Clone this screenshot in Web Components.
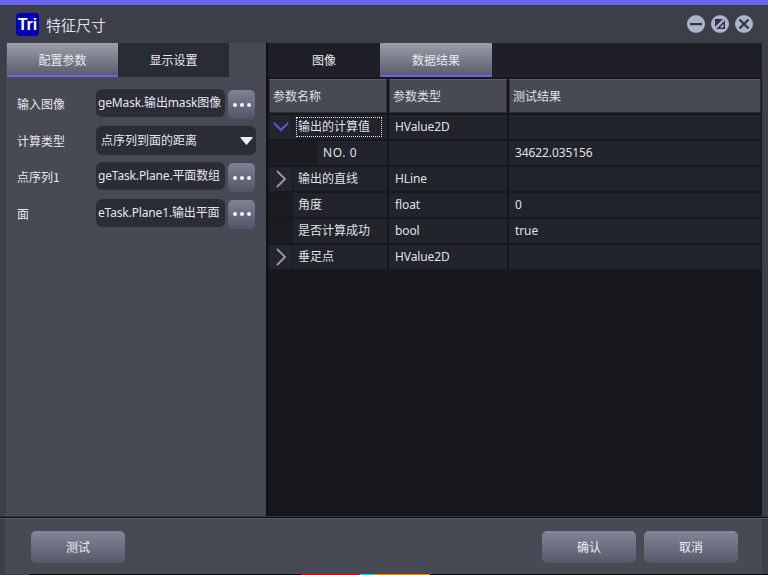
<!DOCTYPE html>
<html lang="zh"><head><meta charset="utf-8"><title>特征尺寸</title>
<style>
html,body{margin:0;height:100%;background:#000;overflow:hidden}
body{font:12px/1.2 "Noto Sans","Noto Sans CJK SC",sans-serif;color:#e4e6ec}
</style></head><body>
<feature-dialog>
  <title-bar slot="title" text="特征尺寸"></title-bar>
  <side-pane slot="left">
    <tab-strip slot="tabs" items="配置参数|显示设置" active="0"></tab-strip>
    <param-row label="输入图像" value="geMask.输出mask图像"></param-row>
    <param-row label="计算类型" value="点序列到面的距离" select></param-row>
    <param-row label="点序列1" value="geTask.Plane.平面数组"></param-row>
    <param-row label="面" value="eTask.Plane1.输出平面"></param-row>
  </side-pane>
  <result-pane slot="right">
    <tab-strip slot="tabs" items="图像|数据结果" active="1"></tab-strip>
    <result-row header a="参数名称" b="参数类型" c="测试结果"></result-row>
    <result-row open a="输出的计算值" b="HValue2D" focus></result-row>
    <result-row child a="NO. 0" c="34622.035156"></result-row>
    <result-row closed a="输出的直线" b="HLine"></result-row>
    <result-row a="角度" b="float" c="0"></result-row>
    <result-row a="是否计算成功" b="bool" c="true"></result-row>
    <result-row closed a="垂足点" b="HValue2D"></result-row>
  </result-pane>
  <dlg-button slot="foot">测试</dlg-button>
  <dlg-button slot="foot-right">确认</dlg-button>
  <dlg-button slot="foot-right">取消</dlg-button>
</feature-dialog>
<script>
const def=(n,html)=>customElements.define(n,class extends HTMLElement{
  connectedCallback(){ if(this.shadowRoot)return; const s=this.attachShadow({mode:'open'}); s.innerHTML=typeof html==='function'?html(this):html;} });
const attr=(e,n)=>{const v=e.getAttribute(n);return v==null?'':v};

def('feature-dialog',`<style>
:host{display:grid;grid-template-rows:5px 38px 473px 3px 55px 1px;height:575px;width:768px;background:#474954}
.accent{background:#6a63f0}
.title{background:#3c3e49;display:flex}
.body{display:grid;grid-template-columns:6px 260px 2px 494px 6px;background:#3c3e49;min-height:0}
.sep{background:#101116;border-top:1px solid #33343c;border-bottom:1px solid #565863;box-sizing:border-box}
.foot{display:flex;background:#474954;padding:12px 24px 11px 26px;border-left:5px solid #3c3e49;border-right:6px solid #3c3e49;justify-content:space-between;box-sizing:border-box}
.foot>div{display:flex;gap:8px}
.edge{background:linear-gradient(90deg,#3c3e49 0 30px,#0b0b0e 30px 301px,#e00000 301px 360px,#20d8d0 360px 375px,#f08000 375px 430px,#0b0b0e 430px)}
.splitter{background:#0f1014}
</style>
<div class="accent"></div>
<div class="title"><slot name="title"></slot></div>
<div class="body"><div></div><slot name="left"></slot><div class="splitter"></div><slot name="right"></slot><div></div></div>
<div class="sep"></div>
<div class="foot"><div><slot name="foot"></slot></div><div><slot name="foot-right"></slot></div></div>
<div class="edge"></div>`);

def('title-bar',e=>`<style>
:host{display:flex;align-items:center;flex:1;padding:0 15px 0 16px;height:38px;box-sizing:border-box}
.logo{width:23px;height:23px;border-radius:4px;background:#0000b4;color:#fff;font:700 16px/23px "Liberation Sans",sans-serif;text-align:center;margin-top:1px}
h1{margin:0 0 0 7px;font:400 15px/1 "Noto Sans CJK SC",sans-serif;color:#dcdee6;flex:1}
.btns{display:flex;gap:6px}
svg{width:18px;height:18px;display:block}
</style>
<div class="logo">Tri</div><h1>${attr(e,'text')}</h1>
<div class="btns">
<svg viewBox="0 0 18 18"><circle cx="9" cy="9" r="9" fill="#aeb3cc"/><rect x="3" y="8" width="12" height="2.2" fill="#33343e"/></svg>
<svg viewBox="0 0 18 18"><circle cx="9" cy="9" r="9" fill="#aeb3cc"/><path d="M4 4h8L4 12z" fill="#33343e"/><path d="M13.2 7v6.2H7z" fill="none" stroke="#33343e" stroke-width="1.5"/></svg>
<svg viewBox="0 0 18 18"><circle cx="9" cy="9" r="9" fill="#aeb3cc"/><path d="M4.5 4.5l9 9M13.5 4.5l-9 9" stroke="#33343e" stroke-width="2.2"/></svg>
</div>`);

def('tab-strip',e=>{
 const items=attr(e,'items').split('|'),a=+attr(e,'active');
 return `<style>
:host{display:flex;height:34px;background:var(--strip,#2a2c35);width:var(--w,auto);box-sizing:border-box}
.t{width:var(--tw,111px);box-sizing:border-box;text-align:center;font:12px/34px "Noto Sans CJK SC",sans-serif;color:#e8e9ee}
.on{background:linear-gradient(#9c9eac,#5a5d6b);border-bottom:2px solid #6a63f0;line-height:33px}
</style>${items.map((t,i)=>`<div class="t ${i==a?'on':''}">${t}</div>`).join('')}`});

def('side-pane',`<style>
:host{display:flex;flex-direction:column;background:#474954;min-width:0;--w:222px;--strip:#2a2c35}
.tabs{padding-left:1px}
.form{display:grid;grid-auto-rows:36.67px;padding:12px 10px 0 11px}
</style><div class="tabs"><slot name="tabs"></slot></div><div class="form"><slot></slot></div>`);

def('param-row',e=>{
 const sel=e.hasAttribute('select');
 return `<style>
:host{display:grid;grid-template-columns:79px 129px 3px 27px;align-items:start;color:#e4e6ec;font:12px/28px "Noto Sans","Noto Sans CJK SC",sans-serif}
.l{font-family:"Noto Sans CJK SC","Noto Sans",sans-serif;line-height:29px;white-space:nowrap}
.f{background:#2a2c38;border-radius:6px;height:28px;overflow:hidden;white-space:nowrap;padding:0 5px 0 2px;box-sizing:border-box;letter-spacing:-.15px}
.s{grid-column:2 / 5;display:flex;justify-content:space-between;align-items:center;padding:1px 3px 0 5px;width:160px;height:29px;letter-spacing:0}
.b{grid-column:4;background:linear-gradient(#7f8294,#525566);border-radius:5px;height:29px;margin-top:1px;display:flex;align-items:center;justify-content:center;gap:3px}
.b i{width:4px;height:4px;border-radius:50%;background:#f2f3f6}
svg{width:13px;height:8px}
</style><div class="l">${attr(e,'label')}</div>${sel?
`<div class="f s"><span>${attr(e,'value')}</span><svg viewBox="0 0 13 8"><path d="M1 0h11q1 0 .5 1L7 7.5q-.5.5-1 0L.5 1Q0 0 1 0z" fill="#eceef2"/></svg></div>`:
`<div class="f">${attr(e,'value')}</div><div></div><div class="b"><i></i><i></i><i></i></div>`}`});

def('result-pane',`<style>
:host{display:flex;flex-direction:column;background:#17181e;min-width:0;--w:auto;--tw:112px;--strip:#1f2027}
.rows{display:grid;gap:2px;padding:2px 1px 0;grid-template-rows:34px repeat(6,24px)}
</style><slot name="tabs"></slot><div class="rows"><slot></slot></div>`);

def('result-row',e=>{
 const h=e.hasAttribute('header'),ch=e.hasAttribute('child'),op=e.hasAttribute('open'),cl=e.hasAttribute('closed');
 const chev=op?`<svg viewBox="0 0 18 12"><path d="M2 2l7 7 7-7" fill="none" stroke="#5e54ea" stroke-width="2"/></svg>`:
   cl?`<svg viewBox="0 0 12 18"><path d="M2 1l8 8-8 8" fill="none" stroke="#9a9ba3" stroke-width="1.8"/></svg>`:'';
 return `<style>
:host{display:grid;grid-template-columns:118px 118px 1fr;gap:2px;font:12px/24px "Noto Sans","Noto Sans CJK SC",sans-serif;color:#dfe1e6}
.c{background:#22242b;padding-left:6px;white-space:nowrap;overflow:hidden;letter-spacing:-.1px}
.hd{background:#474954;border:1px solid #2c2d33;border-top-color:#5a5c68;line-height:32px;padding-left:3px;height:34px;box-sizing:border-box;letter-spacing:0;font-family:"Noto Sans CJK SC",sans-serif}
.n{display:grid;grid-template-columns:${ch?'48px 70px':'23px 94px'};gap:${ch?0:1}px;padding:0;background:none;letter-spacing:${ch?'.6px':0}}
.ic{background:${op||cl?'#23252d':'#1b1c22'};display:flex;align-items:center;justify-content:center}
.tx{background:#22242b;padding-left:${ch?'6px':'5px'}}
.focus{display:inline-block;outline:1px dotted #e8e8e8;line-height:18px;width:84px;margin:3px 0 0 -1px;padding-left:1px;vertical-align:top;box-sizing:border-box}
svg{width:${op?'18px':'12px'};height:${op?'12px':'18px'}}
</style>${h?`<div class="c hd">${attr(e,'a')}</div><div class="c hd">${attr(e,'b')}</div><div class="c hd">${attr(e,'c')}</div>`:
`<div class="c n"><div class="ic">${chev}</div><div class="tx" style="font-family:'Noto Sans','Noto Sans CJK SC',sans-serif">${e.hasAttribute('focus')?`<span class="focus">${attr(e,'a')}</span>`:attr(e,'a')}</div></div><div class="c">${attr(e,'b')}</div><div class="c">${attr(e,'c')}</div>`}`});

def('dlg-button',`<style>
:host{display:block;width:94px;height:32px;border-radius:5px;background:linear-gradient(#838698,#565969);color:#eceef2;font:12px/32px "Noto Sans CJK SC",sans-serif;text-align:center}
</style><slot></slot>`);
</script>
</body></html>
